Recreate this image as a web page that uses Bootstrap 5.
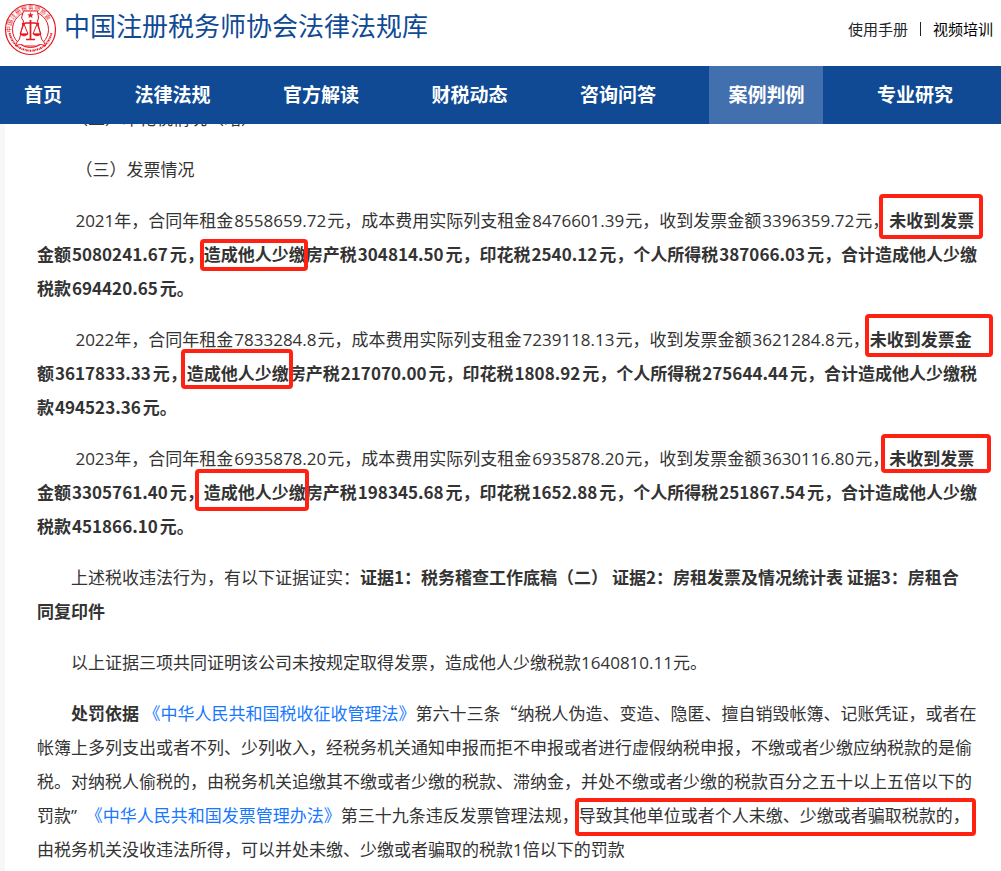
<!DOCTYPE html>
<html lang="zh-CN">
<head>
<meta charset="utf-8">
<meta name="viewport" content="width=device-width, initial-scale=1">
<title>中国注册税务师协会法律法规库</title>
<link href="https://cdn.jsdelivr.net/npm/bootstrap@5.3.0/dist/css/bootstrap.min.css" rel="stylesheet">
<style>
  body { background: #f7f7f7; color: #333; font-family: "Open Sans", "Noto Sans CJK SC", sans-serif; font-size: 17px; line-height: 34px; }
  a { text-decoration: none; }
  .site-head { z-index: 10; }
  .brand-row { height: 66px; padding: 0 8px 0 4px; }
  .site-title { font-size: 26px; line-height: 36px; color: #104a94; margin: 0 0 14px 7px; font-weight: 400; }
  .top-links { font-size: 15px; line-height: 20px; margin-bottom: 8px; }
  .top-links .divider { width: 1px; height: 14px; background: #222; margin: 0 12px; }
  .main-nav { background: #104a94; padding: 0 29px 0 5px; }
  .main-nav a { color: #fff; font-size: 19px; font-weight: 700; line-height: 58px; padding: 0 19px; }
  .main-nav a.active { background: #426fad; }
  .article { margin: -22px 0 0 5px; padding: 0 20px 4px 32px; min-height: calc(100vh - 102px); }
  .article p { margin: 0 0 17px; text-indent: 2em; white-space: nowrap; }
  .article b { font-family: "Noto Sans CJK SC", sans-serif; line-height: 0; }
  .article a { color: #1677ff; }
  .num { margin: 0 1px; }
  b .num { margin-right: 2px; }
  .quote { font-family: "Noto Sans CJK SC", sans-serif; line-height: 0; }
  /* hand-drawn style highlight frames, laid over the text */
  .boxed { position: relative; }
  .boxed::after { content: ""; position: absolute; border: 4px solid #ff2213; border-radius: 4px; pointer-events: none; }
  .missing-2021::after { inset: -13px -9px -7px -10px; }
  .caused-2021::after { inset: -2px -2px -5px -4px; }
  .missing-2022::after { inset: -12px -21px -6px -5px; }
  .caused-2022::after { inset: -11px -4px -4px -6px; }
  .missing-2023::after { inset: -11px -17px -3px -8px; }
  .caused-2023::after { inset: -10px -3px -7px -9px; }
  .clause::after { inset: -6px -6px -9px -4px; }
</style>
<script src="https://cdn.jsdelivr.net/npm/bootstrap@5.3.0/dist/js/bootstrap.bundle.min.js"></script>
</head>
<body>
<header class="site-head position-sticky top-0 bg-white">
  <div class="brand-row d-flex align-items-center justify-content-between">
    <div class="d-flex align-items-center">
      <svg class="mb-2" width="53" height="53" viewBox="0 0 53 53" fill="none" stroke="#e5161c" aria-hidden="true">
        <circle cx="26.500" cy="26.500" r="25" stroke-width="1.200"/>
        <circle cx="26.500" cy="26.500" r="18" stroke-width="1"/>
        <path id="arc" d="M8.200 32A19.200 19.200 0 1 1 44.800 32" stroke="none"/>
        <text font-size="6" fill="#e5161c" stroke="none"><textPath href="#arc" startOffset="3">中国注册税务师协会</textPath></text>
        <path d="M5.600 30A21.200 21.200 0 0 0 47.400 30" stroke-width="2" stroke-dasharray="1.500 .7 .8 .6"/>
        <path d="M19.500 8h14l1 7-1 3 4 18 3 4 1 3c-4-2-6-2-9 0h-12c-3-2-5-2-9 0l1-3 3-4 4-18-2-3z" fill="#fff" stroke-width="1"/>
        <path d="M26.500 9.500l.8 2h2l-1.500 1.300.5 2-1.800-1.200-1.800 1.200.5-2-1.500-1.300h2z" fill="#e5161c" stroke-width=".3"/>
        <path d="M26.500 17v19M18 21q8.500-2.500 17 0M22 36.500h9" stroke-width="1.700"/>
        <path d="M20 21l-4 10h8zM33 21l-4 10h8z" stroke-width="1"/>
        <path d="M16 31h8q-4 4-8 0M29 31h8q-4 4-8 0" fill="#e5161c" stroke-width=".5"/>
      </svg>
      <h1 class="site-title">中国注册税务师协会法律法规库</h1>
    </div>
    <div class="top-links d-flex align-items-center">
      <a href="#" class="text-body">使用手册</a><span class="divider"></span><a href="#" class="text-black">视频培训</a>
    </div>
  </div>
  <nav class="main-nav d-flex justify-content-between">
    <a href="#">首页</a>
    <a href="#">法律法规</a>
    <a href="#">官方解读</a>
    <a href="#">财税动态</a>
    <a href="#">咨询问答</a>
    <a href="#" class="active" aria-current="page">案例判例</a>
    <a href="#">专业研究</a>
  </nav>
</header>
<main class="article bg-white">
  <p>（二）印花税情况（略）</p>
  <p>&nbsp;（三）发票情况</p>
  <p>&nbsp;2021年，合同年租金<span class="num">8558659.72</span>元，成本费用实际列支租金<span class="num">8476601.39</span>元，收到发票金额<span class="num">3396359.72</span>元，<b><span class="boxed missing-2021">未收到发票</span><br>金额<span class="num">5080241.67</span>元，<span class="boxed caused-2021">造成他人少缴</span>房产税<span class="num">304814.50</span>元，印花税<span class="num">2540.12</span>元，个人所得税<span class="num">387066.03</span>元，合计造成他人少缴<br>税款<span class="num">694420.65</span>元。</b></p>
  <p>&nbsp;2022年，合同年租金<span class="num">7833284.8</span>元，成本费用实际列支租金<span class="num">7239118.13</span>元，收到发票金额<span class="num">3621284.8</span>元，<b><span class="boxed missing-2022">未收到发票金</span><br>额<span class="num">3617833.33</span>元，<span class="boxed caused-2022">造成他人少缴</span>房产税<span class="num">217070.00</span>元，印花税<span class="num">1808.92</span>元，个人所得税<span class="num">275644.44</span>元，合计造成他人少缴税<br>款<span class="num">494523.36</span>元。</b></p>
  <p>&nbsp;2023年，合同年租金<span class="num">6935878.20</span>元，成本费用实际列支租金<span class="num">6935878.20</span>元，收到发票金额<span class="num">3630116.80</span>元，<b><span class="boxed missing-2023">未收到发票</span><br>金额<span class="num">3305761.40</span>元，<span class="boxed caused-2023">造成他人少缴</span>房产税<span class="num">198345.68</span>元，印花税<span class="num">1652.88</span>元，个人所得税<span class="num">251867.54</span>元，合计造成他人少缴<br>税款<span class="num">451866.10</span>元。</b></p>
  <p>上述税收违法行为，有以下证据证实：<b>证据1：税务稽查工作底稿（二） 证据2：房租发票及情况统计表 证据3：房租合<br>同复印件</b></p>
  <p>以上证据三项共同证明该公司未按规定取得发票，造成他人少缴税款1640810.11元。</p>
  <p class="mb-0"><b>处罚依据</b> <a href="#">《中华人民共和国税收征收管理法》</a>第六十三条<span class="quote">“</span>纳税人伪造、变造、隐匿、擅自销毁帐簿、记账凭证，或者在<br>帐簿上多列支出或者不列、少列收入，经税务机关通知申报而拒不申报或者进行虚假纳税申报，不缴或者少缴应纳税款的是偷<br>税。对纳税人偷税的，由税务机关追缴其不缴或者少缴的税款、滞纳金，并处不缴或者少缴的税款百分之五十以上五倍以下的<br>罚款”&nbsp; <a href="#">《中华人民共和国发票管理办法》</a>第三十九条违反发票管理法规，<span class="boxed clause">导致其他单位或者个人未缴、少缴或者骗取税款的，</span><br>由税务机关没收违法所得，可以并处未缴、少缴或者骗取的税款1倍以下的罚款</p>
</main>
</body>
</html>
